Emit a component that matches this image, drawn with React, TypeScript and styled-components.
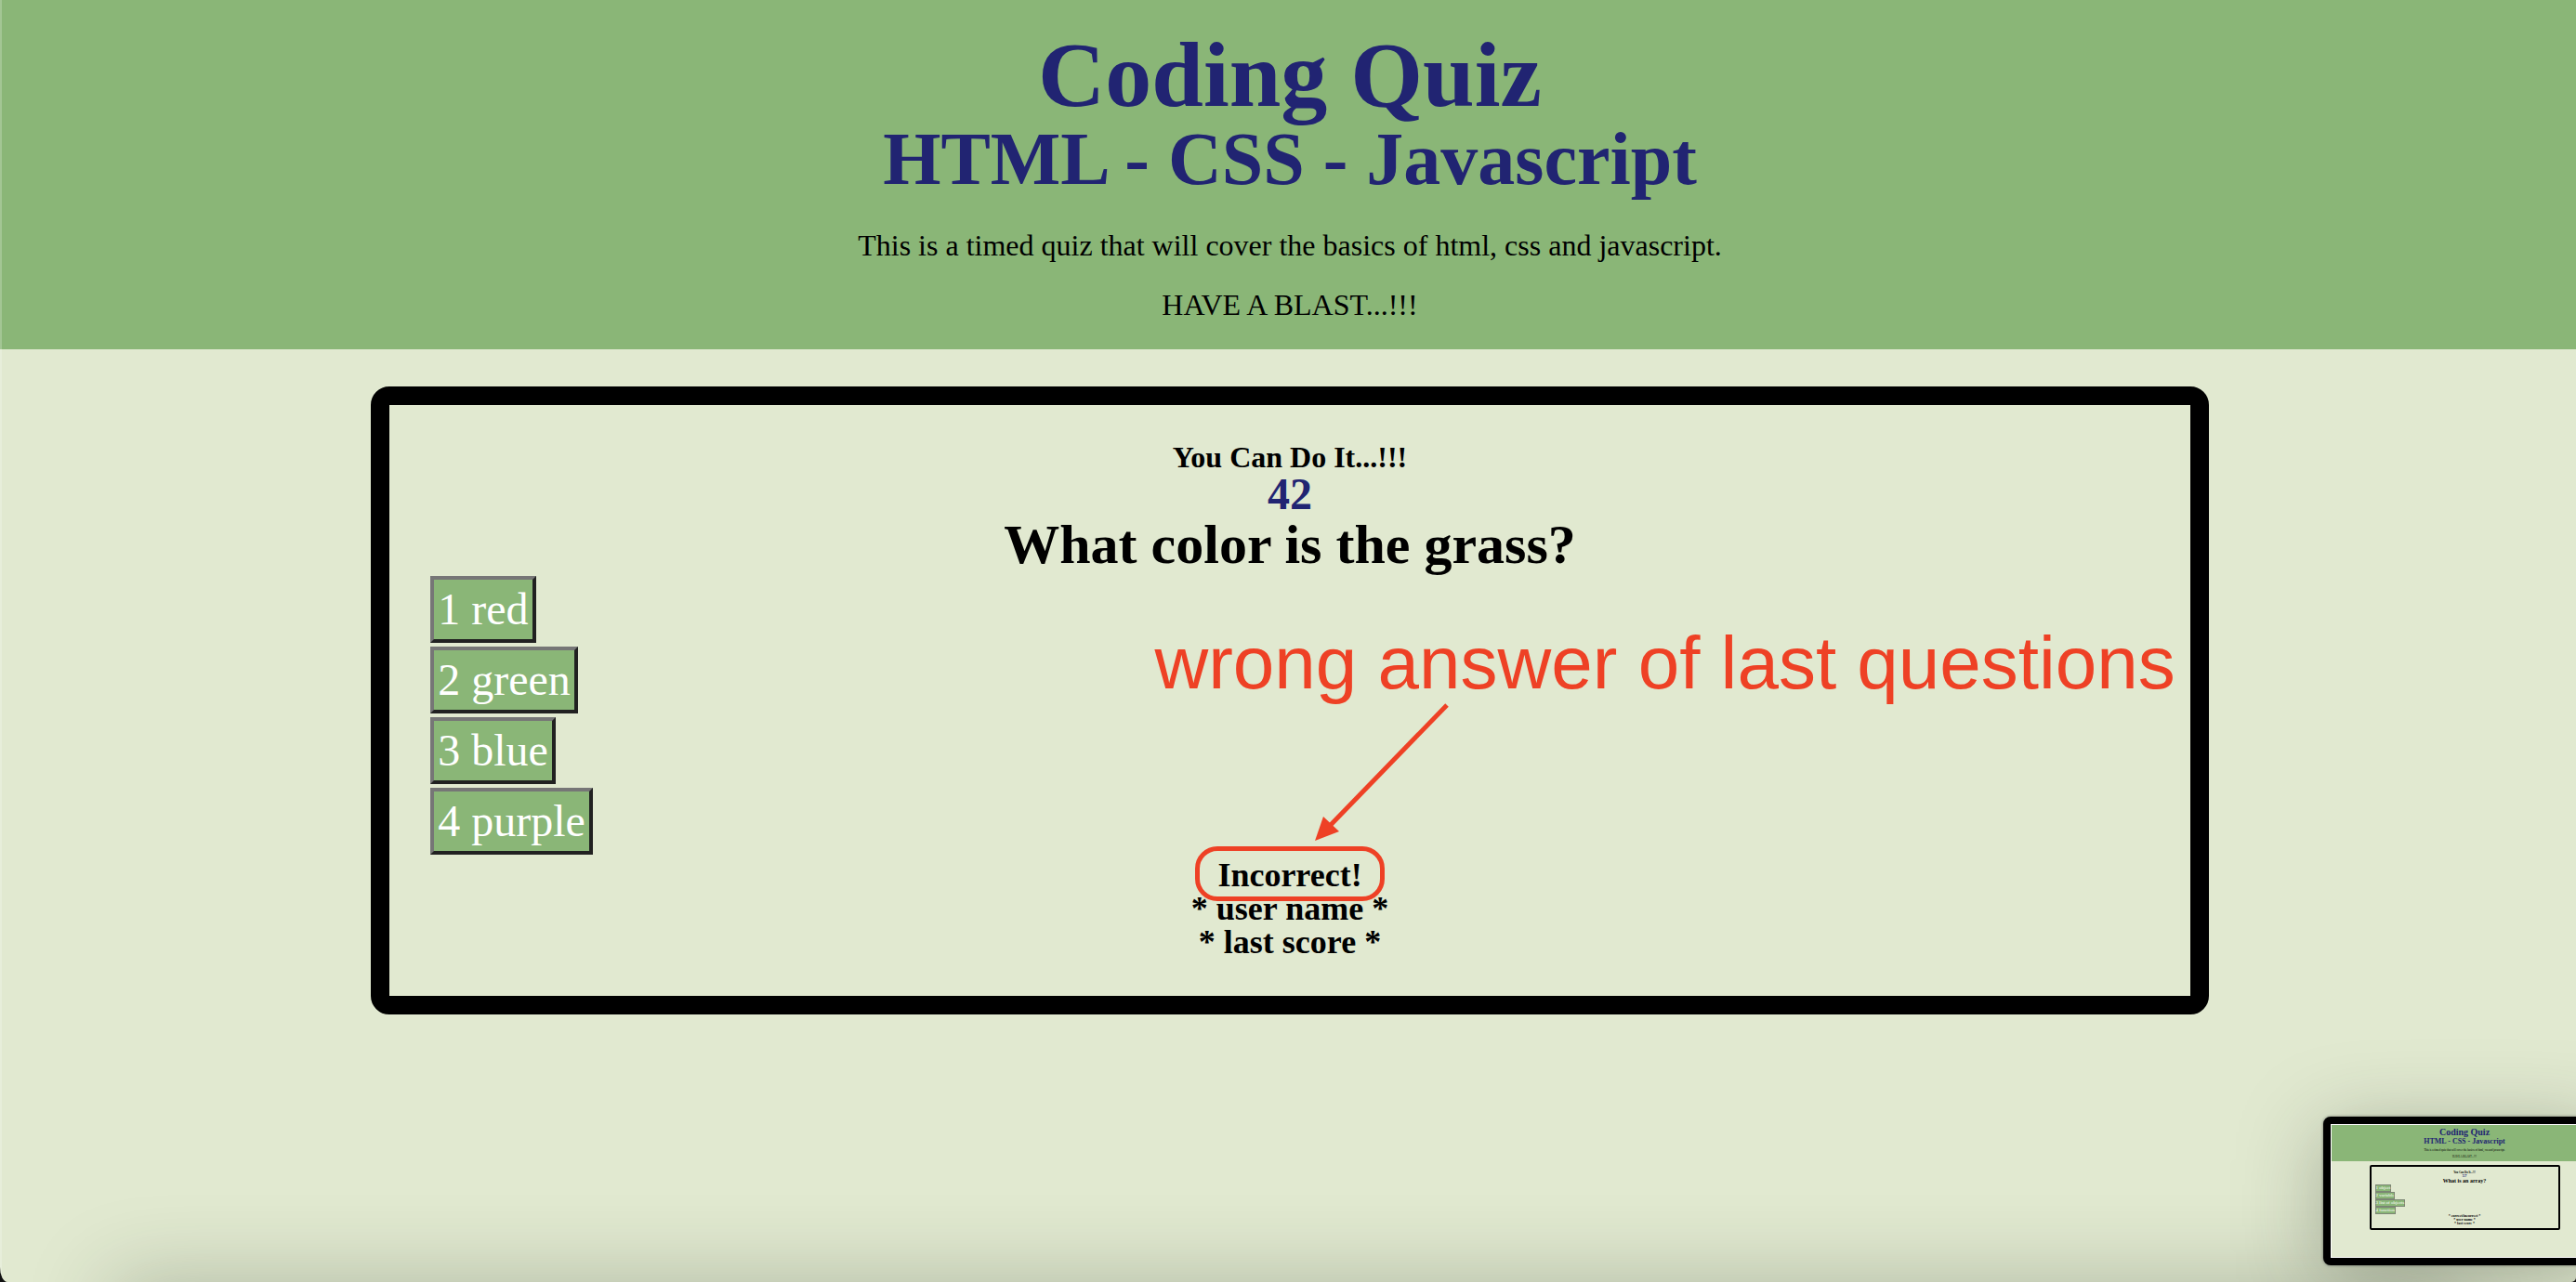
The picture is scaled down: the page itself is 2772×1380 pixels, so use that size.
import React, { useState } from "react";
import styled, { createGlobalStyle } from "styled-components";

const serif = '"Times New Roman", "Liberation Serif", serif';
const sans = 'Helvetica, "Liberation Sans", Arial, sans-serif';
const green = "#8ab677";
const pale = "#e1e9d0";
const navy = "#212472";
const red = "#ee4125";

const Global = createGlobalStyle`
  * { box-sizing: border-box; margin: 0; padding: 0; }
  html { background: #111; }
  body { font-family: ${serif}; color: #000; }
`;

const Page = styled.div`
  position: relative;
  min-height: 100vh;
  overflow: hidden;
  background: ${pale};
  border-radius: 0 0 5px 8px / 0 0 5px 16px;
`;

const WindowEdge = styled.div`
  position: absolute;
  left: 0;
  top: 0;
  bottom: 0;
  width: 2px;
  background: rgba(255, 255, 255, 0.22);
`;

const Header = styled.header`
  padding: 31px 0 0 4px;
  background: ${green};
  text-align: center;
  padding-bottom: 32px;
`;

const Title = styled.h1`
  font-size: 100px;
  line-height: 100px;
  color: ${navy};
`;

const Subtitle = styled.h2`
  margin-bottom: 37px;
  font-size: 80px;
  line-height: 80px;
  color: ${navy};
`;

const Intro = styled.p`
  font-size: 32px;
  line-height: 32px;
  & + & { margin-top: 32px; }
`;

const Main = styled.main`
  padding: 40px 0 40px 4px;
`;

const QuizCard = styled.section`
  position: relative;
  box-sizing: content-box;
  width: 70%;
  margin: 0 auto;
  border: 20px solid #000;
  border-radius: 20px;
`;

const QuizBody = styled.div`
  display: flex;
  flex-direction: column;
  align-items: center;
  padding: 40px 44px;
`;

const Cheer = styled.h4`
  font-size: 32px;
  line-height: 32px;
`;

const Timer = styled.h3`
  font-size: 48px;
  line-height: 48px;
  color: ${navy};
`;

const Question = styled.h2`
  font-size: 60px;
  line-height: 60px;
`;

const Answers = styled.ol`
  display: flex;
  flex-direction: column;
  gap: 4px;
  align-self: flex-start;
  padding: 4px 0;
  list-style: none;
`;

const Answer = styled.button`
  display: block;
  padding: 4px;
  border: 4px solid;
  border-color: #767676 #212121 #212121 #767676;
  background: ${green};
  color: #fff;
  font-family: ${serif};
  font-size: 48px;
  line-height: 56px;
  cursor: pointer;
`;

const Status = styled.h4`
  position: relative;
  font-size: 36px;
  line-height: 36px;
`;

const Ring = styled.span`
  position: absolute;
  inset: -13px -24px -10px;
  border: 5px solid ${red};
  border-radius: 24px;
`;

const Note = styled.p`
  position: absolute;
  right: 16px;
  top: 232px;
  color: ${red};
  font-family: ${sans};
  font-size: 80px;
  line-height: 92px;
  white-space: nowrap;
`;

const Arrow = styled.svg`
  position: absolute;
  left: 50%;
  bottom: 162px;
  width: 180px;
  height: 160px;
`;

const BottomShade = styled.div`
  position: absolute;
  left: 120px;
  right: 120px;
  bottom: -80px;
  height: 80px;
  box-shadow: 0 0 90px 0 rgba(40, 50, 35, 0.28);
`;

const Preview = styled.aside`
  position: absolute;
  left: calc(100% - 272px);
  bottom: 18px;
  width: 304px;
  height: 160px;
  border: 8px solid #000;
  border-radius: 8px;
  background: ${pale};
  box-shadow: 0 0 3px rgba(0, 0, 0, 0.5), 0 16px 90px 0 rgba(40, 50, 35, 0.34);
`;

const PreviewPage = styled.div`
  width: 100%;
  height: 100%;
  border: 1px solid #fff;
  text-align: center;
`;

const PreviewHeader = styled.div`
  padding: 3px 0;
  background: ${green};
`;

const PreviewLine = styled.p<{ $size: number; $line: number; $bold?: boolean; $navy?: boolean }>`
  font-size: ${(p) => p.$size}px;
  line-height: ${(p) => p.$line}px;
  font-weight: ${(p) => (p.$bold ? 700 : 400)};
  color: ${(p) => (p.$navy ? navy : "#000")};
`;

const PreviewCard = styled.div`
  width: 205px;
  height: 70px;
  margin: 4px auto 0;
  padding: 4px;
  border: 2px solid #000;
  border-radius: 2px;
`;

const PreviewAnswers = styled.div`
  display: flex;
  flex-direction: column;
  align-items: flex-start;
`;

const PreviewAnswer = styled.button`
  padding: 0;
  border: 1px solid #7b8574;
  background: ${green};
  color: #fff;
  font-family: ${serif};
  font-size: 5px;
  line-height: 6px;
`;

const answers = ["1 red", "2 green", "3 blue", "4 purple"];
const previewAnswers = ["1 object", "2 variable", "3 list of objects", "4 function"];

function PreviewWindow() {
  return (
    <Preview aria-label="Previous question">
      <PreviewPage>
        <PreviewHeader>
          <PreviewLine $size={10} $line={10} $bold $navy>Coding Quiz</PreviewLine>
          <PreviewLine $size={8} $line={9} $bold $navy>HTML - CSS - Javascript</PreviewLine>
          <PreviewLine $size={3} $line={10}>This is a timed quiz that will cover the basics of html, css and javascript.</PreviewLine>
          <PreviewLine $size={3} $line={4}>HAVE A BLAST...!!!</PreviewLine>
        </PreviewHeader>
        <PreviewCard>
          <PreviewLine $size={3} $line={4} $bold>You Can Do It...!!!</PreviewLine>
          <PreviewLine $size={5} $line={4} $bold $navy>57</PreviewLine>
          <PreviewLine $size={6} $line={7} $bold>What is an array?</PreviewLine>
          <PreviewAnswers>
            {previewAnswers.map((a) => <PreviewAnswer key={a} type="button">{a}</PreviewAnswer>)}
          </PreviewAnswers>
          <PreviewLine $size={4} $line={4} $bold>* correct/incorrect *</PreviewLine>
          <PreviewLine $size={4} $line={4} $bold>* user name *</PreviewLine>
          <PreviewLine $size={4} $line={4} $bold>* last score *</PreviewLine>
        </PreviewCard>
      </PreviewPage>
    </Preview>
  );
}

export default function App() {
  const [, setChosen] = useState<string | null>(null);
  return (
    <>
      <Global />
      <Page>
        <Header>
          <Title>Coding Quiz</Title>
          <Subtitle>HTML - CSS - Javascript</Subtitle>
          <Intro>This is a timed quiz that will cover the basics of html, css and javascript.</Intro>
          <Intro>HAVE A BLAST...!!!</Intro>
        </Header>
        <Main>
          <QuizCard>
            <QuizBody>
              <Cheer>You Can Do It...!!!</Cheer>
              <Timer>42</Timer>
              <Question>What color is the grass?</Question>
              <Answers>
                {answers.map((a) => (
                  <li key={a}>
                    <Answer type="button" onClick={() => setChosen(a)}>{a}</Answer>
                  </li>
                ))}
              </Answers>
              <Status>Incorrect!<Ring /></Status>
              <Status>* user name *</Status>
              <Status>* last score *</Status>
            </QuizBody>
            <Note>wrong answer of last questions</Note>
            <Arrow viewBox="0 0 180 160" aria-hidden="true">
              <path d="M169 9L40 142" stroke={red} strokeWidth="5" fill="none" />
              <path d="M27 155L36 129L53 145Z" fill={red} />
            </Arrow>
          </QuizCard>
        </Main>
        <BottomShade />
        <WindowEdge />
        <PreviewWindow />
      </Page>
    </>
  );
}
